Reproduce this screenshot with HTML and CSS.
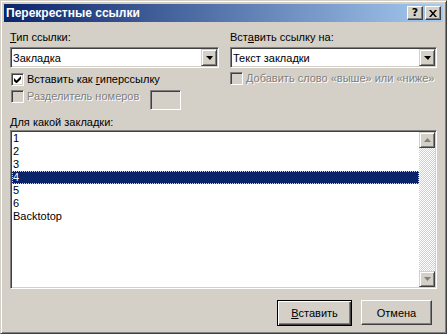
FILE: index.html
```html
<!DOCTYPE html>
<html lang="ru">
<head>
    <meta charset="UTF-8">
    <meta name="viewport" content="width=device-width, initial-scale=1.0">
    <title>Перекрестные ссылки</title>
    <link rel="stylesheet" href="styles.css">
</head>
<body>

    <div class="window">
        <div class="title-bar">
            <span class="title">Перекрестные ссылки</span>
            <div class="title-buttons">
                <div class="title-btn help">?</div>
                <div class="title-btn">
                    <svg width="8" height="7" viewBox="0 0 8 7">
                        <path d="M0 0h2l2 2.5L6 0h2L5 3.5 8 7H6L4 4.5 2 7H0l3-3.5z" fill="#000"/>
                    </svg>
                </div>
            </div>
        </div>

        <div class="content">
            <div class="top">
                <div class="column">
                    <div class="label"><u>Т</u>ип ссылки:</div>
                    <div class="combo">
                        <span class="combo-text">Закладка</span>
                        <div class="drop-btn"><span class="arrow"></span></div>
                    </div>
                    <div class="check-row first">
                        <span class="checkbox">
                            <svg width="7" height="7" viewBox="0 0 7 7">
                                <path d="M0 2v3l2 2h1l4-4V0L2.5 4.5z" fill="#000"/>
                            </svg>
                        </span>
                        <span>Вставить как <u>г</u>иперссылку</span>
                    </div>
                    <div class="check-row second">
                        <span class="checkbox disabled"></span>
                        <span class="disabled-text">Разделитель номеров</span>
                        <span class="small-field"></span>
                    </div>
                </div>

                <div class="column">
                    <div class="label">Вст<u>а</u>вить ссылку на:</div>
                    <div class="combo">
                        <span class="combo-text">Текст закладки</span>
                        <div class="drop-btn"><span class="arrow"></span></div>
                    </div>
                    <div class="check-row right">
                        <span class="checkbox disabled"></span>
                        <span class="disabled-text">Добавить слово «выше» или «ниже»</span>
                    </div>
                </div>
            </div>

            <div class="label list-label"><u>Д</u>ля какой закладки:</div>
            <div class="listbox">
                <div class="items">
                    <div class="item">1</div>
                    <div class="item">2</div>
                    <div class="item">3</div>
                    <div class="item selected">4</div>
                    <div class="item">5</div>
                    <div class="item">6</div>
                    <div class="item">Backtotop</div>
                </div>
                <div class="scrollbar">
                    <div class="scroll-btn">
                        <svg width="7" height="4" viewBox="0 0 7 4">
                            <path d="M3.5 0L7 4H0z" fill="#808080"/>
                        </svg>
                    </div>
                    <div class="track"></div>
                    <div class="scroll-btn">
                        <svg width="7" height="4" viewBox="0 0 7 4">
                            <path d="M0 0h7L3.5 4z" fill="#808080"/>
                        </svg>
                    </div>
                </div>
            </div>

            <div class="buttons">
                <button class="btn default"><u>В</u>ставить</button>
                <button class="btn cancel">Отмена</button>
            </div>
        </div>
    </div>

</body>
</html>
```

FILE: styles.css
```css
body {
    margin: 0;
    font-family: "Liberation Sans", Arial, sans-serif;
    font-size: 11px;
    color: #000;
    background-color: #d4d0c8;
}

.window {
    width: 447px;
    height: 334px;
    box-sizing: border-box;
    background-color: #d4d0c8;
    border: 1px solid;
    border-color: #d4d0c8 #404040 #404040 #d4d0c8;
    box-shadow: inset 1px 1px #fff, inset -1px -1px #808080;
    padding: 3px;
    display: flex;
    flex-direction: column;
}

.title-bar {
    height: 18px;
    flex-shrink: 0;
    display: flex;
    align-items: center;
    justify-content: space-between;
    padding: 0 2px;
    background: linear-gradient(to right, #0a246a, #a6caf0);
}

.title {
    color: #fff;
    font-family: "Liberation Sans", Arial, sans-serif;
    font-weight: bold;
    font-size: 12px;
}

.title-buttons {
    display: flex;
    gap: 2px;
}

.title-btn {
    width: 16px;
    height: 14px;
    box-sizing: border-box;
    border: 1px solid;
    border-color: #fff #404040 #404040 #fff;
    box-shadow: inset -1px -1px #808080;
    background-color: #d4d0c8;
    display: flex;
    align-items: center;
    justify-content: center;
}

.title-btn.help {
    font-family: "DejaVu Sans", sans-serif;
    font-weight: bold;
    font-size: 11px;
    line-height: 12px;
}

.content {
    flex: 1;
    padding: 9px 6px 0 6px;
    display: flex;
    flex-direction: column;
}

.top {
    display: flex;
    gap: 11px;
}

.column {
    display: flex;
    flex-direction: column;
}

.column:first-child {
    width: 209px;
}

.column:last-child {
    width: 207px;
}

.label {
    line-height: 13px;
    height: 13px;
    white-space: nowrap;
}

.combo {
    margin-top: 3px;
    height: 21px;
    box-sizing: border-box;
    background-color: #fff;
    border: 1px solid;
    border-color: #808080 #fff #fff #808080;
    box-shadow: inset 1px 1px #404040, inset -1px -1px #d4d0c8;
    padding: 1px;
    display: flex;
    align-items: center;
}

.combo-text {
    flex: 1;
    padding-left: 1px;
}

.drop-btn {
    width: 16px;
    height: 17px;
    box-sizing: border-box;
    background-color: #d4d0c8;
    border: 1px solid;
    border-color: #d4d0c8 #404040 #404040 #d4d0c8;
    box-shadow: inset 1px 1px #fff, inset -1px -1px #808080;
    display: flex;
    align-items: center;
    justify-content: center;
}

.arrow {
    width: 0;
    height: 0;
    border-left: 4px solid transparent;
    border-right: 3px solid transparent;
    border-top: 4px solid #000;
    margin-top: 1px;
}

.check-row {
    display: flex;
    align-items: center;
    gap: 3px;
    white-space: nowrap;
    line-height: 13px;
}

.check-row.first {
    margin-top: 5px;
    margin-left: 1px;
}

.check-row.second {
    margin-top: 4px;
    margin-left: 1px;
    height: 20px;
    align-items: flex-start;
}

.check-row.right {
    margin-top: 4px;
}

.checkbox {
    width: 13px;
    height: 13px;
    box-sizing: border-box;
    flex-shrink: 0;
    background-color: #fff;
    border: 1px solid;
    border-color: #808080 #fff #fff #808080;
    box-shadow: inset 1px 1px #404040, inset -1px -1px #d4d0c8;
    display: flex;
    align-items: center;
    justify-content: center;
}

.checkbox.disabled {
    background-color: #d4d0c8;
}

.disabled-text {
    color: #808080;
    text-shadow: 1px 1px #fff;
}

.small-field {
    width: 31px;
    height: 20px;
    box-sizing: border-box;
    margin-left: 8px;
    border: 1px solid;
    border-color: #808080 #fff #fff #808080;
    box-shadow: inset 1px 1px #404040, inset -1px -1px #d4d0c8;
}

.list-label {
    margin-top: 6px;
}

.listbox {
    margin-top: 1px;
    height: 159px;
    box-sizing: border-box;
    background-color: #fff;
    border: 1px solid;
    border-color: #808080 #fff #fff #808080;
    box-shadow: inset 1px 1px #404040, inset -1px -1px #d4d0c8;
    padding: 1px;
    display: flex;
}

.items {
    flex: 1;
}

.item {
    height: 13px;
    line-height: 13px;
    padding-left: 1px;
}

.item.selected {
    background-color: #0a246a;
    color: #fff;
    outline: 1px dotted #e8d890;
    outline-offset: -1px;
}

.scrollbar {
    width: 16px;
    display: flex;
    flex-direction: column;
}

.scroll-btn {
    height: 16px;
    box-sizing: border-box;
    background-color: #d4d0c8;
    border: 1px solid;
    border-color: #d4d0c8 #404040 #404040 #d4d0c8;
    box-shadow: inset 1px 1px #fff, inset -1px -1px #808080;
    display: flex;
    align-items: center;
    justify-content: center;
}

.track {
    flex: 1;
    background-image: repeating-conic-gradient(#fff 0 25%, #d4d0c8 0 50%);
    background-size: 2px 2px;
}

.buttons {
    margin-top: 11px;
    margin-right: 5px;
    display: flex;
    justify-content: flex-end;
    gap: 9px;
}

.btn {
    height: 25px;
    width: 71px;
    box-sizing: border-box;
    font-family: "Liberation Sans", Arial, sans-serif;
    font-size: 11px;
    color: #000;
    background-color: #d4d0c8;
    border: 1px solid;
    border-color: #fff #404040 #404040 #fff;
    box-shadow: inset -1px -1px #808080;
    padding: 0;
}

.btn.default {
    width: 75px;
    height: 26px;
    border: 1px solid #000;
    box-shadow: inset 1px 1px #fff, inset -1px -1px #404040, inset -2px -2px #808080;
}
```
